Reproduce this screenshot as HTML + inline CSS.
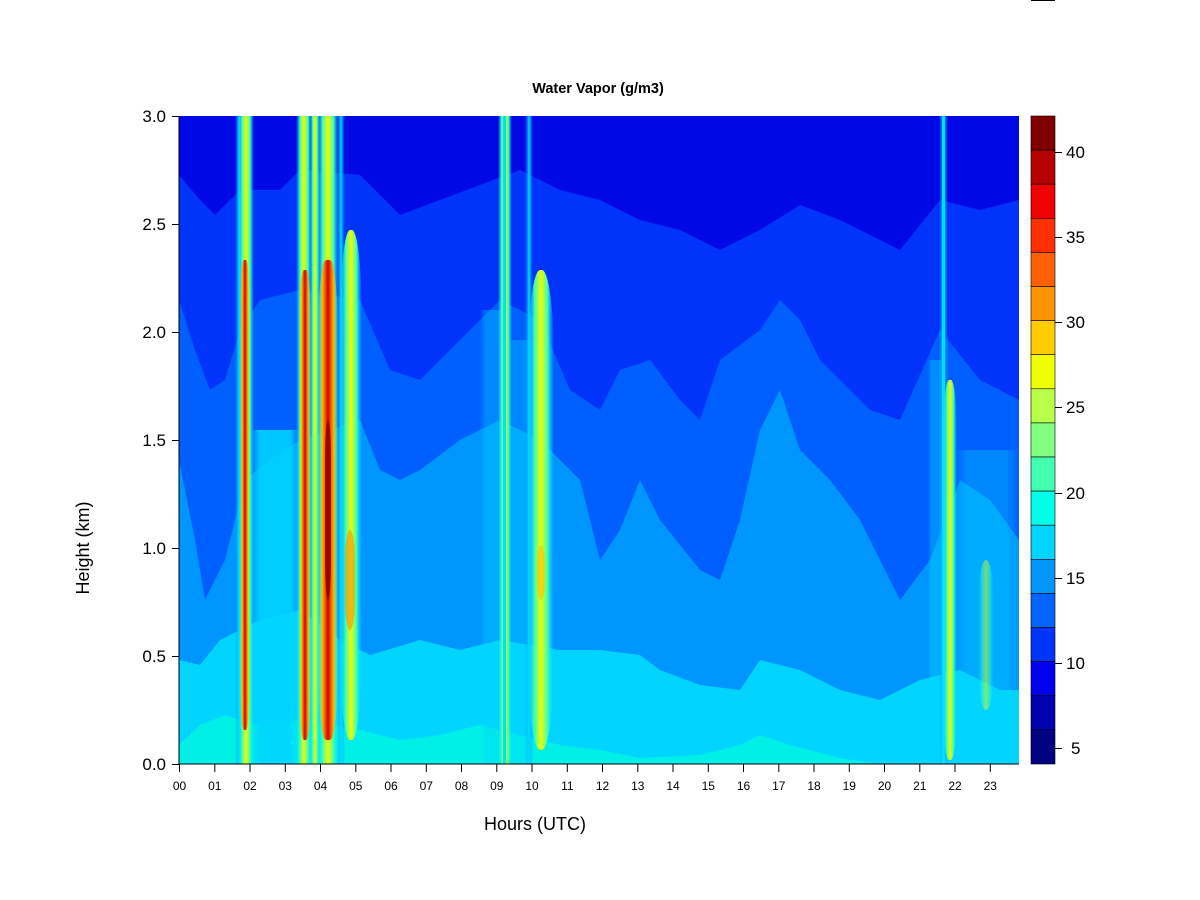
<!DOCTYPE html>
<html><head><meta charset="utf-8"><style>
html,body{margin:0;padding:0;background:#fff;width:1200px;height:900px;overflow:hidden}
</style></head><body>
<svg width="1200" height="900" viewBox="0 0 1200 900" xmlns="http://www.w3.org/2000/svg" font-family="Liberation Sans, Arial, sans-serif">
<defs>
<clipPath id="pc"><rect x="179" y="116" width="840" height="648"/></clipPath>
<linearGradient id="gR" x1="0" x2="1" y1="0" y2="0">
<stop offset="0" stop-color="#f0ff00" stop-opacity="0"/><stop offset="0.25" stop-color="#ffa000"/><stop offset="0.5" stop-color="#d00000"/><stop offset="0.75" stop-color="#ffa000"/><stop offset="1" stop-color="#f0ff00" stop-opacity="0"/></linearGradient>
<linearGradient id="gY" x1="0" x2="1" y1="0" y2="0">
<stop offset="0" stop-color="#00e0ff" stop-opacity="0"/><stop offset="0.25" stop-color="#40ffb0"/><stop offset="0.5" stop-color="#f0ff00"/><stop offset="0.75" stop-color="#40ffb0"/><stop offset="1" stop-color="#00e0ff" stop-opacity="0"/></linearGradient>
<linearGradient id="gC" x1="0" x2="1" y1="0" y2="0">
<stop offset="0" stop-color="#0096ff" stop-opacity="0"/><stop offset="0.5" stop-color="#00e0ff"/><stop offset="1" stop-color="#0096ff" stop-opacity="0"/></linearGradient>
<linearGradient id="gL" x1="0" x2="1" y1="0" y2="0">
<stop offset="0" stop-color="#00d4ff" stop-opacity="0"/><stop offset="0.2" stop-color="#00d4ff"/><stop offset="0.8" stop-color="#00d4ff"/><stop offset="1" stop-color="#00d4ff" stop-opacity="0"/></linearGradient>
</defs>
<g clip-path="url(#pc)">
<rect x="179" y="116" width="840" height="648" fill="#0008e6"/>
<polygon fill="#0034fb" points="179,175 200,200 215,215 240,190 280,190 300,170 360,175 400,215 440,200 480,185 520,170 560,190 600,200 640,220 680,230 720,250 760,230 800,205 840,220 880,240 900,250 940,200 980,210 1019,200 1019,764 179,764"/>
<polygon fill="#0060ff" points="179,300 195,350 210,390 225,380 240,330 260,300 300,290 360,300 390,370 420,380 460,340 500,300 540,320 570,390 600,410 620,370 650,360 680,400 700,420 720,360 760,330 780,300 800,320 820,360 840,380 870,410 900,420 940,330 980,380 1019,400 1019,764 179,764"/>
<polygon fill="#0096ff" points="179,460 195,540 205,600 225,560 245,480 270,460 300,440 360,420 380,470 400,480 420,470 460,440 500,420 540,440 580,480 600,560 620,530 640,480 660,520 700,570 720,580 740,520 760,430 780,390 800,450 830,480 860,520 880,560 900,600 930,560 960,480 990,500 1019,540 1019,764 179,764"/>
<polygon fill="#00d4ff" points="179,660 200,665 220,640 260,620 300,610 340,640 370,655 420,640 460,650 500,640 560,650 600,650 640,655 660,670 700,685 740,690 760,660 800,670 840,690 880,700 920,680 960,670 1000,690 1019,690 1019,764 179,764"/>
<polygon fill="#00f0e8" points="179,745 200,725 225,715 240,720 260,725 300,720 360,730 400,740 440,735 480,725 520,735 560,745 600,750 640,758 700,755 740,745 760,735 790,745 840,758 880,764 179,764"/>
<rect x="250" y="430" width="50" height="334" fill="url(#gL)" opacity="0.9"/>
<rect x="480" y="310" width="26" height="454" fill="url(#gL)" opacity="0.35"/>
<rect x="508" y="340" width="26" height="424" fill="url(#gL)" opacity="0.35"/>
<rect x="928" y="360" width="16" height="404" fill="url(#gL)" opacity="0.4"/>
<rect x="955" y="450" width="64" height="314" fill="url(#gL)" opacity="0.35"/>
<!-- stripes -->
<rect x="235" y="116" width="8" height="648" fill="url(#gC)"/>
<rect x="238" y="116" width="16" height="648" fill="url(#gY)"/>
<rect x="240" y="260" width="10" height="470" rx="4" ry="60" fill="url(#gR)"/>
<rect x="296" y="116" width="16" height="648" fill="url(#gY)"/>
<rect x="299" y="270" width="12" height="470" rx="5" ry="60" fill="url(#gR)"/>
<rect x="310" y="116" width="10" height="648" fill="url(#gY)"/>
<rect x="317" y="116" width="22" height="648" fill="url(#gY)"/>
<rect x="318" y="260" width="20" height="480" rx="8" ry="80" fill="url(#gR)"/>
<rect x="325" y="420" width="6" height="180" rx="3" ry="40" fill="#900000" opacity="0.8"/>
<rect x="337" y="116" width="8" height="648" fill="url(#gC)"/>
<rect x="340" y="230" width="22" height="510" rx="10" ry="90" fill="url(#gY)"/>
<rect x="345" y="530" width="10" height="100" rx="5" ry="30" fill="#ff9000" opacity="0.6"/>
<rect x="498" y="116" width="14" height="648" fill="url(#gY)"/>
<rect x="503" y="116" width="3" height="648" fill="#00e0ff"/>
<rect x="525" y="116" width="8" height="648" fill="url(#gC)"/>
<rect x="528" y="270" width="26" height="480" rx="12" ry="90" fill="url(#gY)"/>
<rect x="537" y="545" width="8" height="55" rx="4" ry="20" fill="#ffc000" opacity="0.6"/>
<rect x="939" y="116" width="9" height="648" fill="url(#gC)"/>
<rect x="942" y="116" width="3" height="648" fill="#00e0ff"/>
<rect x="943" y="380" width="14" height="380" rx="6" ry="60" fill="url(#gY)"/>
<rect x="978" y="560" width="16" height="150" rx="8" ry="40" fill="url(#gY)" opacity="0.5"/>
</g>
<g stroke="#000" stroke-width="1">
<line x1="179" y1="764" x2="1019" y2="764"/>
<line x1="179" y1="116" x2="179" y2="764"/>
<line x1="172" y1="116.5" x2="179" y2="116.5"/><line x1="172" y1="224.5" x2="179" y2="224.5"/><line x1="172" y1="332.5" x2="179" y2="332.5"/><line x1="172" y1="440.5" x2="179" y2="440.5"/><line x1="172" y1="548.5" x2="179" y2="548.5"/><line x1="172" y1="656.5" x2="179" y2="656.5"/><line x1="172" y1="764.5" x2="179" y2="764.5"/>
</g>
<g font-size="17" text-anchor="end" fill="#000">
<text x="166" y="122">3.0</text><text x="166" y="230">2.5</text><text x="166" y="338">2.0</text><text x="166" y="446">1.5</text><text x="166" y="554">1.0</text><text x="166" y="662">0.5</text><text x="166" y="770">0.0</text>
</g>
<g stroke="#000" stroke-width="1">
<line x1="179.5" y1="764" x2="179.5" y2="772"/><line x1="214.8" y1="764" x2="214.8" y2="772"/><line x1="250" y1="764" x2="250" y2="772"/><line x1="285.3" y1="764" x2="285.3" y2="772"/><line x1="320.5" y1="764" x2="320.5" y2="772"/><line x1="355.8" y1="764" x2="355.8" y2="772"/><line x1="391" y1="764" x2="391" y2="772"/><line x1="426.3" y1="764" x2="426.3" y2="772"/><line x1="461.5" y1="764" x2="461.5" y2="772"/><line x1="496.8" y1="764" x2="496.8" y2="772"/><line x1="532" y1="764" x2="532" y2="772"/><line x1="567.3" y1="764" x2="567.3" y2="772"/><line x1="602.5" y1="764" x2="602.5" y2="772"/><line x1="637.8" y1="764" x2="637.8" y2="772"/><line x1="673" y1="764" x2="673" y2="772"/><line x1="708.3" y1="764" x2="708.3" y2="772"/><line x1="743.5" y1="764" x2="743.5" y2="772"/><line x1="778.8" y1="764" x2="778.8" y2="772"/><line x1="814" y1="764" x2="814" y2="772"/><line x1="849.3" y1="764" x2="849.3" y2="772"/><line x1="884.5" y1="764" x2="884.5" y2="772"/><line x1="919.8" y1="764" x2="919.8" y2="772"/><line x1="955" y1="764" x2="955" y2="772"/><line x1="990.3" y1="764" x2="990.3" y2="772"/>
</g>
<g font-size="12" text-anchor="middle" fill="#000">
<text x="179.5" y="790">00</text><text x="214.8" y="790">01</text><text x="250" y="790">02</text><text x="285.3" y="790">03</text><text x="320.5" y="790">04</text><text x="355.8" y="790">05</text><text x="391" y="790">06</text><text x="426.3" y="790">07</text><text x="461.5" y="790">08</text><text x="496.8" y="790">09</text><text x="532" y="790">10</text><text x="567.3" y="790">11</text><text x="602.5" y="790">12</text><text x="637.8" y="790">13</text><text x="673" y="790">14</text><text x="708.3" y="790">15</text><text x="743.5" y="790">16</text><text x="778.8" y="790">17</text><text x="814" y="790">18</text><text x="849.3" y="790">19</text><text x="884.5" y="790">20</text><text x="919.8" y="790">21</text><text x="955" y="790">22</text><text x="990.3" y="790">23</text>
</g>
<text x="598" y="93" font-size="14.5" font-weight="bold" text-anchor="middle">Water Vapor (g/m3)</text>
<text x="535" y="830" font-size="18" text-anchor="middle">Hours (UTC)</text>
<text transform="translate(89,548) rotate(-90)" font-size="18" text-anchor="middle">Height (km)</text>
<g stroke="#000" stroke-width="0.6">
<rect x="1031" y="116" width="24" height="34.1" fill="#800000"/>
<rect x="1031" y="150.1" width="24" height="34.1" fill="#b40000"/>
<rect x="1031" y="184.2" width="24" height="34.1" fill="#f00000"/>
<rect x="1031" y="218.3" width="24" height="34.1" fill="#ff3000"/>
<rect x="1031" y="252.4" width="24" height="34.1" fill="#ff6000"/>
<rect x="1031" y="286.5" width="24" height="34.1" fill="#ff9400"/>
<rect x="1031" y="320.6" width="24" height="34.1" fill="#ffcc00"/>
<rect x="1031" y="354.7" width="24" height="34.1" fill="#f0ff00"/>
<rect x="1031" y="388.8" width="24" height="34.1" fill="#b8ff48"/>
<rect x="1031" y="422.9" width="24" height="34.1" fill="#80ff80"/>
<rect x="1031" y="457" width="24" height="34.1" fill="#40ffb0"/>
<rect x="1031" y="491.1" width="24" height="34.1" fill="#00ffe8"/>
<rect x="1031" y="525.2" width="24" height="34.1" fill="#00d4ff"/>
<rect x="1031" y="559.3" width="24" height="34.1" fill="#0096ff"/>
<rect x="1031" y="593.4" width="24" height="34.1" fill="#0064ff"/>
<rect x="1031" y="627.5" width="24" height="34.1" fill="#0034fb"/>
<rect x="1031" y="661.6" width="24" height="34.1" fill="#0000ee"/>
<rect x="1031" y="695.7" width="24" height="34.1" fill="#0000b0"/>
<rect x="1031" y="729.8" width="24" height="34.2" fill="#000080"/>
</g>
<g stroke="#000" stroke-width="1">
<line x1="1055" y1="152.5" x2="1062" y2="152.5"/><line x1="1055" y1="237.5" x2="1062" y2="237.5"/><line x1="1055" y1="322.5" x2="1062" y2="322.5"/><line x1="1055" y1="407.5" x2="1062" y2="407.5"/><line x1="1055" y1="493.5" x2="1062" y2="493.5"/><line x1="1055" y1="578.5" x2="1062" y2="578.5"/><line x1="1055" y1="663.5" x2="1062" y2="663.5"/><line x1="1055" y1="748.5" x2="1062" y2="748.5"/>
</g>
<g font-size="17" fill="#000">
<text x="1066" y="158">40</text><text x="1066" y="243">35</text><text x="1066" y="328">30</text><text x="1066" y="413">25</text><text x="1066" y="499">20</text><text x="1066" y="584">15</text><text x="1066" y="669">10</text><text x="1071" y="754">5</text>
</g>
<line x1="1031" y1="0.5" x2="1055" y2="0.5" stroke="#000"/>
</svg>
</body></html>
